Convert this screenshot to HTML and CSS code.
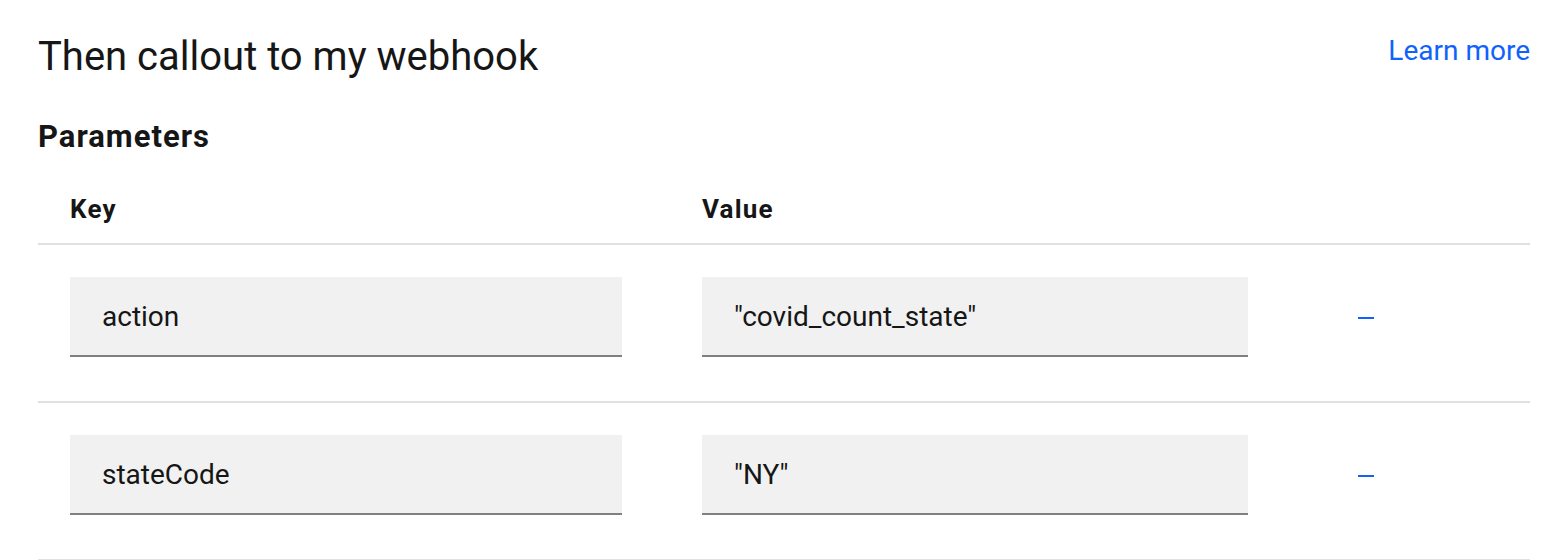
FILE: index.html
```html
<!DOCTYPE html>
<html lang="en">
<head>
<meta charset="utf-8">
<title>Webhook callout</title>
<link rel="stylesheet" href="styles.css">
</head>
<body>
<section class="panel">
  <header class="panel-header">
    <h2 class="panel-title">Then callout to my webhook</h2>
    <a class="learn-more" href="#">Learn more</a>
  </header>
  <h3 class="section-title">Parameters</h3>
  <div class="param-table">
    <div class="param-row param-head">
      <div class="cell">Key</div>
      <div class="cell">Value</div>
      <div class="cell"></div>
    </div>
    <div class="param-row">
      <div class="cell"><div class="field field-key">action</div></div>
      <div class="cell"><div class="field field-value">"covid_count_state"</div></div>
      <div class="cell cell-action"><button class="remove-btn" aria-label="Remove"><span class="minus"></span></button></div>
    </div>
    <div class="param-row">
      <div class="cell"><div class="field field-key">stateCode</div></div>
      <div class="cell"><div class="field field-value">"NY"</div></div>
      <div class="cell cell-action"><button class="remove-btn" aria-label="Remove"><span class="minus"></span></button></div>
    </div>
  </div>
</section>
</body>
</html>
```

FILE: styles.css
```css
* { box-sizing: border-box; }

html, body {
  margin: 0;
  padding: 0;
  background: #ffffff;
}

body {
  font-family: Roboto, "Noto Sans", "Liberation Sans", sans-serif;
  color: #161616;
}

.panel {
  padding: 0 28px 0 38px;
}

.panel-header {
  display: flex;
  justify-content: space-between;
  align-items: flex-start;
  padding-top: 33px;
}

.panel-title {
  margin: 0;
  font-size: 40px;
  line-height: 48px;
  font-weight: 400;
}

.learn-more {
  font-size: 28px;
  line-height: 36px;
  color: #0f62fe;
  text-decoration: none;
}

.section-title {
  margin: 0;
  padding-top: 38px;
  font-size: 31px;
  line-height: 36px;
  font-weight: 700;
  letter-spacing: 1px;
}

.param-table {
  margin-top: 36px;
}

.param-row {
  display: grid;
  grid-template-columns: 632px 632px 1fr;
  border-bottom: 2px solid #e0e0e0;
  padding: 32px 0 44px;
}

.param-row.param-head {
  padding: 0 0 16px;
  font-size: 26px;
  line-height: 36px;
  font-weight: 700;
  letter-spacing: 1.2px;
}

.cell {
  padding-left: 32px;
}

.field {
  height: 80px;
  background: #f1f1f1;
  border-bottom: 2px solid #808080;
  padding: 0 32px;
  display: flex;
  align-items: center;
  font-size: 28px;
  color: #161616;
}

.field-key { width: 552px; }
.field-value { width: 546px; }

.cell-action {
  display: flex;
  align-items: center;
  padding-left: 40px;
}

.remove-btn {
  width: 48px;
  height: 80px;
  border: 0;
  background: transparent;
  padding: 0;
  display: flex;
  align-items: center;
  justify-content: center;
  cursor: pointer;
}

.minus {
  display: block;
  width: 16px;
  height: 2px;
  background: #0f62fe;
  margin-top: 2px;
}
```
